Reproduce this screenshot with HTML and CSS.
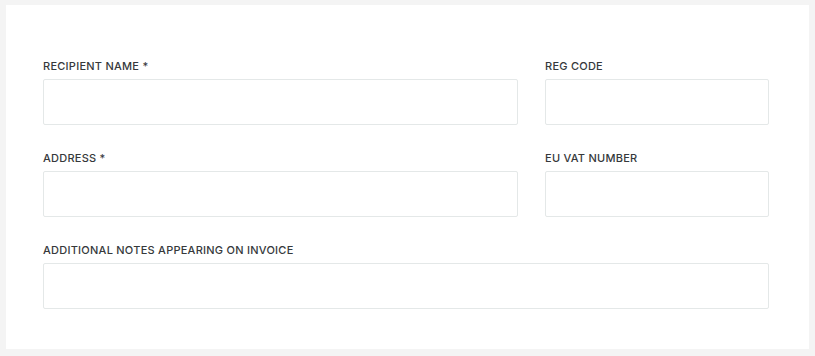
FILE: index.html
```html
<!DOCTYPE html>
<html lang="en">
<head>
    <meta charset="UTF-8">
    <meta name="viewport" content="width=device-width, initial-scale=1.0">
    <title>Invoice details</title>
    <link rel="stylesheet" href="styles.css">
</head>
<body>

<div id="invoice-card">
	<form id="invoice-form">
		<div class="field">
			<label class="field-label" for="recipient-name">RECIPIENT NAME *</label>
			<input class="field-input" id="recipient-name" type="text">
		</div>
		<div class="field">
			<label class="field-label" for="reg-code">REG CODE</label>
			<input class="field-input" id="reg-code" type="text">
		</div>
		<div class="field">
			<label class="field-label" for="address">ADDRESS *</label>
			<input class="field-input" id="address" type="text">
		</div>
		<div class="field">
			<label class="field-label" for="vat-number">EU VAT NUMBER</label>
			<input class="field-input" id="vat-number" type="text">
		</div>
		<div class="field field-wide">
			<label class="field-label" for="notes">ADDITIONAL NOTES APPEARING ON INVOICE</label>
			<input class="field-input" id="notes" type="text">
		</div>
	</form>
</div>

</body>
</html>
```

FILE: styles.css
```css
*{
	padding: 0;
	margin: 0;
	box-sizing: border-box;
}

body{
	font-family: "Inter", "Liberation Sans", sans-serif;
	background-color: #f4f4f4;
	padding: 5px 6px 7px 6px;
}

#invoice-card{
	background-color: white;
	height: 344px;
	padding: 54px 40px 0 37px;
}

#invoice-form{
	display: grid;
	grid-template-columns: 1fr 224px;
	column-gap: 27px;
	row-gap: 26px;
}

.field{
	display: flex;
	flex-direction: column;
	gap: 6px;
}

.field-wide{
	grid-column: 1 / 3;
}

.field-label{
	color: #36393b;
	font-size: 11px;
	font-weight: 500;
	letter-spacing: 0.25px;
	line-height: 14px;
}

.field-input{
	height: 46px;
	border: 1px solid #e4e8e8;
	border-radius: 2px;
	background-color: white;
	outline: none;
	padding: 0 12px;
	font-family: inherit;
}
```
